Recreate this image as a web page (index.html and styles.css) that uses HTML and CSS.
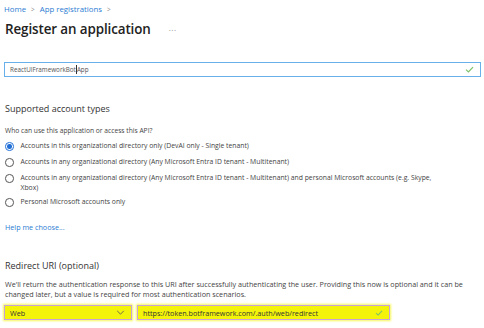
FILE: index.html
```html
<!DOCTYPE html>
<html lang="en">
<head>
  <meta charset="UTF-8" />
  <title>Register an application</title>
  <link rel="stylesheet" href="styles.css">
</head>
<body>

  <!-- Header -->
  <div class="crumbs">
    <a href="#">Home</a>
    <span class="sep">&gt;</span>
    <a href="#">App registrations</a>
    <span class="sep">&gt;</span>
  </div>
  <div class="title-row">
    <h1>Register an application</h1>
    <span class="more">&middot;&middot;&middot;</span>
  </div>

  <!-- Name -->
  <div class="field name-field">
    <span class="value">ReactUIFrameworkBot<span class="caret"></span>App</span>
    <svg class="check" viewBox="0 0 10 8" width="9" height="7"><path d="M1 4.2 L3.8 6.8 L9 1.2" fill="none" stroke="#7dc36b" stroke-width="1.4"/></svg>
  </div>

  <!-- Account types -->
  <h2>Supported account types</h2>
  <p class="question">Who can use this application or access this API?</p>

  <ul class="radios">
    <li><span class="radio checked"></span><span class="label">Accounts in this organizational directory only (DevAI only - Single tenant)</span></li>
    <li><span class="radio"></span><span class="label">Accounts in any organizational directory (Any Microsoft Entra ID tenant - Multitenant)</span></li>
    <li><span class="radio"></span><span class="label">Accounts in any organizational directory (Any Microsoft Entra ID tenant - Multitenant) and personal Microsoft accounts (e.g. Skype, Xbox)</span></li>
    <li class="last"><span class="radio"></span><span class="label">Personal Microsoft accounts only</span></li>
  </ul>

  <a class="help" href="#">Help me choose...</a>

  <!-- Redirect -->
  <h2 class="redirect-title">Redirect URI (optional)</h2>
  <p class="desc">We'll return the authentication response to this URI after successfully authenticating the user. Providing this now is optional and it can be changed later, but a value is required for most authentication scenarios.</p>

  <div class="uri-row">
    <div class="field marked platform">
      <span class="value">Web</span>
      <svg class="chev" viewBox="0 0 10 6" width="9" height="5"><path d="M1 1 L5 5 L9 1" fill="none" stroke="#555" stroke-width="1"/></svg>
    </div>
    <div class="field marked uri">
      <span class="value">https://token.botframework.com/.auth/web/redirect</span>
      <svg class="check" viewBox="0 0 10 8" width="8" height="6"><path d="M1 4.2 L3.8 6.8 L9 1.2" fill="none" stroke="#7dc36b" stroke-width="1.4"/></svg>
    </div>
  </div>

</body>
</html>
```

FILE: styles.css
```css
* {
  margin: 0;
  padding: 0;
  box-sizing: border-box;
}

body {
  background: #fff;
  color: #323130;
  font-family: 'Open Sans', 'Noto Sans', sans-serif;
  font-size: 6.8px;
  padding: 3px 3px 0 5px;
  width: 484px;
  height: 328px;
  overflow: hidden;
}

a {
  color: #2b7cd3;
  text-decoration: none;
}

/* Header */
.crumbs {
  display: flex;
  align-items: center;
  gap: 5px;
  font-size: 7.8px;
  height: 12px;
  margin-left: -1px;
}

.crumbs .sep {
  color: #888;
  font-size: 6.5px;
}

.title-row {
  display: flex;
  align-items: center;
  gap: 18px;
  margin-top: 4px;
  height: 20px;
}

h1 {
  font-size: 13.4px;
  font-weight: 600;
  color: #222;
  letter-spacing: -0.1px;
}

.more {
  color: #777;
  font-size: 8px;
  letter-spacing: 0.5px;
}

/* Inputs */
.field {
  display: flex;
  align-items: center;
  justify-content: space-between;
  height: 15px;
  padding: 0 6px 0 5px;
  border: 1.5px solid #68b0ea;
  background: #fff;
}

.name-field {
  margin-top: 23px;
  margin-left: -1px;
  color: #555;
  font-size: 6.3px;
}

.caret {
  display: inline-block;
  width: 1px;
  height: 9px;
  background: #333;
  vertical-align: -2.5px;
}

/* Account types */
h2 {
  font-size: 9px;
  font-weight: 400;
  color: #333;
  margin-top: 25px;
}

.question {
  margin-top: 11px;
  color: #444;
  font-size: 6.7px;
}

.radios {
  list-style: none;
  margin-top: 2px;
}

.radios li {
  display: flex;
  align-items: flex-start;
  gap: 7px;
  margin-top: 6px;
  line-height: 10px;
  color: #444;
}

.radios li.last {
  margin-top: 4px;
}

.radios .label {
  max-width: 430px;
}

.radio {
  flex: none;
  width: 8.5px;
  height: 8.5px;
  border: 1px solid #555;
  border-radius: 50%;
  margin-top: 1px;
  display: flex;
  align-items: center;
  justify-content: center;
}

.radio.checked {
  border-color: #1f6fd6;
}

.radio.checked::after {
  content: "";
  width: 4.5px;
  height: 4.5px;
  border-radius: 50%;
  background: #1f6fd6;
}

.help {
  display: block;
  margin-top: 15px;
  font-size: 7.2px;
}

/* Redirect */
.redirect-title {
  margin-top: 27px;
}

.desc {
  margin-top: 7px;
  line-height: 10px;
  color: #444;
  font-size: 7.2px;
  max-width: 468px;
}

.uri-row {
  display: flex;
  gap: 5px;
  margin-top: 6px;
  margin-left: -1px;
}

.field.marked {
  border: 1px solid #c7a3da;
  background: #f4f40a;
  box-shadow: 0 0 2px 1px #f7f75a;
  color: #333;
  font-size: 7.2px;
}

.platform {
  width: 128px;
}

.uri {
  width: 253px;
}
```
